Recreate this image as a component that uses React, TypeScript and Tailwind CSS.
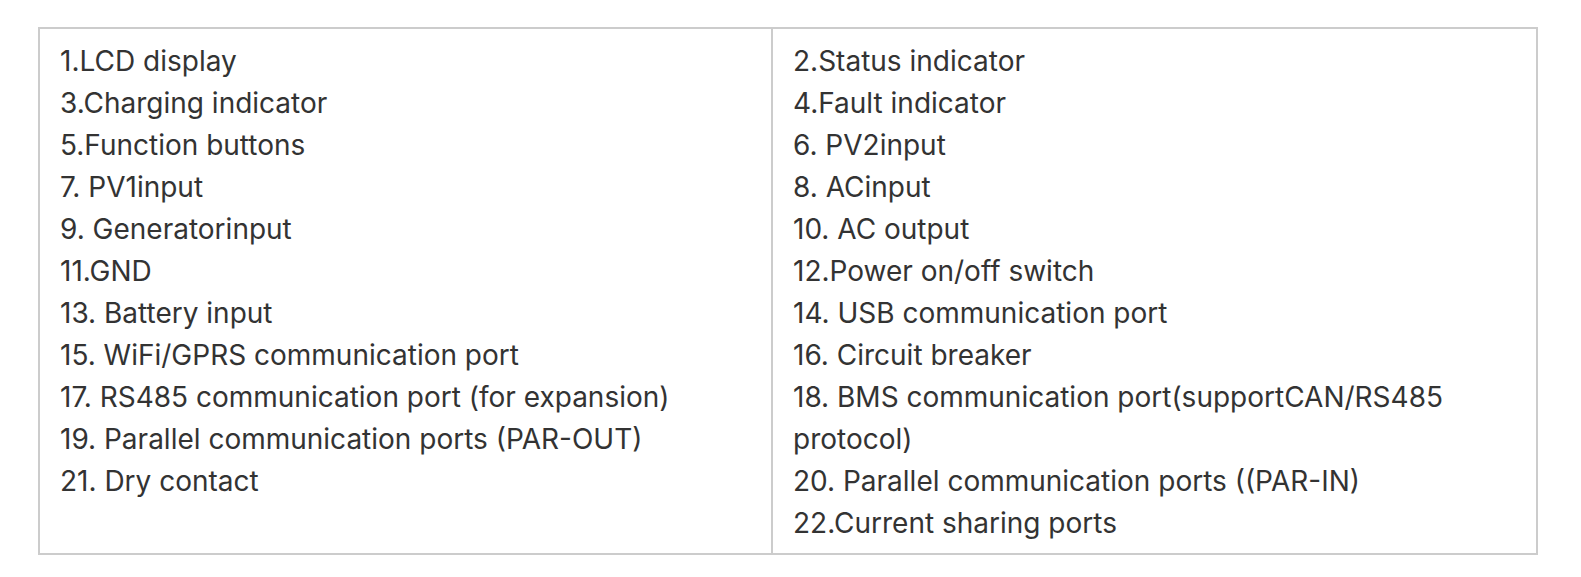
const leftItems = [
  "1.LCD display",
  "3.Charging indicator",
  "5.Function buttons",
  "7. PV1input",
  "9. Generatorinput",
  "11.GND",
  "13. Battery input",
  "15. WiFi/GPRS communication port",
  "17. RS485 communication port (for expansion)",
  "19. Parallel communication ports (PAR-OUT)",
  "21. Dry contact",
];

const rightItems = [
  "2.Status indicator",
  "4.Fault indicator",
  "6. PV2input",
  "8. ACinput",
  "10. AC output",
  "12.Power on/off switch",
  "14. USB communication port",
  "16. Circuit breaker",
  "18. BMS communication port(supportCAN/RS485 protocol)",
  "20. Parallel communication ports ((PAR-IN)",
  "22.Current sharing ports",
];

export default function App() {
  return (
    <div className="w-[1581px] h-[577px] bg-white pt-[27px] pl-[38px] font-['Inter',sans-serif] text-[28px] leading-[42px] text-[#333333]">
      <div className="w-[1500px] flex border-2 border-[#cccccc]">
        <div className="w-[733px] border-r-2 border-[#cccccc] px-[20px] pt-[11px] pb-[9px]">
          {leftItems.map((item) => (
            <p key={item}>{item}</p>
          ))}
        </div>
        <div className="flex-1 px-[20px] pt-[11px] pb-[9px]">
          {rightItems.map((item) => (
            <p key={item}>{item}</p>
          ))}
        </div>
      </div>
    </div>
  );
}
